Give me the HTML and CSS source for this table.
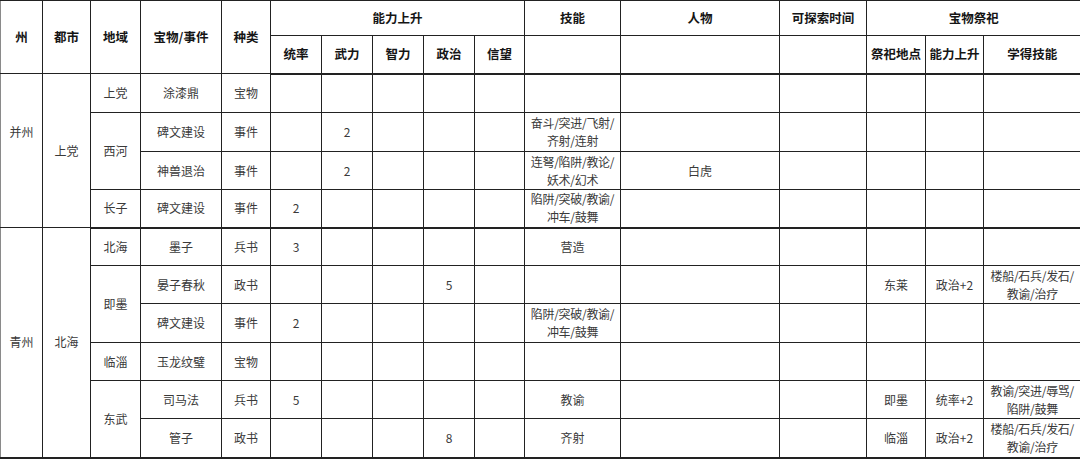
FILE: index.html
```html
<!DOCTYPE html>
<html lang="zh-CN">
<head>
<meta charset="utf-8">
<link rel="stylesheet" href="styles.css">
</head>
<body>
<table class="sheet">
  <colgroup>
    <col class="c-zhou"><col class="c-city"><col class="c-area"><col class="c-item"><col class="c-kind">
    <col class="c-stat"><col class="c-stat"><col class="c-stat"><col class="c-stat"><col class="c-stat2">
    <col class="c-skill"><col class="c-person"><col class="c-time"><col class="c-place"><col class="c-up"><col class="c-learn">
  </colgroup>
  <thead>
    <tr class="h1">
      <th rowspan="2">州</th>
      <th rowspan="2">都市</th>
      <th rowspan="2">地域</th>
      <th rowspan="2">宝物/事件</th>
      <th rowspan="2">种类</th>
      <th colspan="5">能力上升</th>
      <th>技能</th>
      <th>人物</th>
      <th>可探索时间</th>
      <th colspan="3">宝物祭祀</th>
    </tr>
    <tr class="h2">
      <th>统率</th><th>武力</th><th>智力</th><th>政治</th><th>信望</th>
      <th></th><th></th><th></th>
      <th>祭祀地点</th><th>能力上升</th><th>学得技能</th>
    </tr>
  </thead>
  <tbody>
    <tr class="r39">
      <td rowspan="4" class="zhou-top">并州</td>
      <td rowspan="4">上党</td>
      <td>上党</td><td>涂漆鼎</td><td>宝物</td>
      <td></td><td></td><td></td><td></td><td></td><td></td><td></td><td></td><td></td><td></td><td></td>
    </tr>
    <tr class="r39">
      <td rowspan="2">西河</td><td>碑文建设</td><td>事件</td>
      <td></td><td>2</td><td></td><td></td><td></td>
      <td class="two">奋斗/突进/飞射/<br>齐射/连射</td>
      <td></td><td></td><td></td><td></td><td></td>
    </tr>
    <tr class="r38">
      <td>神兽退治</td><td>事件</td>
      <td></td><td>2</td><td></td><td></td><td></td>
      <td class="two">连弩/陷阱/教论/<br>妖术/幻术</td>
      <td>白虎</td><td></td><td></td><td></td><td></td>
    </tr>
    <tr class="r38 sep">
      <td>长子</td><td>碑文建设</td><td>事件</td>
      <td>2</td><td></td><td></td><td></td><td></td>
      <td class="two">陷阱/突破/教谕/<br>冲车/鼓舞</td>
      <td></td><td></td><td></td><td></td><td></td>
    </tr>
    <tr class="r38">
      <td rowspan="6" class="sep">青州</td>
      <td rowspan="6" class="sep">北海</td>
      <td>北海</td><td>墨子</td><td>兵书</td>
      <td>3</td><td></td><td></td><td></td><td></td>
      <td>营造</td>
      <td></td><td></td><td></td><td></td><td></td>
    </tr>
    <tr class="r38">
      <td rowspan="2">即墨</td><td>晏子春秋</td><td>政书</td>
      <td></td><td></td><td></td><td>5</td><td></td>
      <td></td><td></td><td></td>
      <td>东莱</td><td>政治+2</td><td class="two">楼船/石兵/发石/<br>教谕/治疗</td>
    </tr>
    <tr class="r39">
      <td>碑文建设</td><td>事件</td>
      <td>2</td><td></td><td></td><td></td><td></td>
      <td class="two">陷阱/突破/教谕/<br>冲车/鼓舞</td>
      <td></td><td></td><td></td><td></td><td></td>
    </tr>
    <tr class="r38">
      <td>临淄</td><td>玉龙纹璧</td><td>宝物</td>
      <td></td><td></td><td></td><td></td><td></td><td></td><td></td><td></td><td></td><td></td><td></td>
    </tr>
    <tr class="r38">
      <td rowspan="2" class="sep">东武</td><td>司马法</td><td>兵书</td>
      <td>5</td><td></td><td></td><td></td><td></td>
      <td>教谕</td>
      <td></td><td></td>
      <td>即墨</td><td>统率+2</td><td class="two">教谕/突进/辱骂/<br>陷阱/鼓舞</td>
    </tr>
    <tr class="r39 sep">
      <td>管子</td><td>政书</td>
      <td></td><td></td><td></td><td>8</td><td></td>
      <td>齐射</td>
      <td></td><td></td>
      <td>临淄</td><td>政治+2</td><td class="two">楼船/石兵/发石/<br>教谕/治疗</td>
    </tr>
  </tbody>
</table>
</body>
</html>
```

FILE: styles.css
```css
html, body {
  margin: 0;
  padding: 0;
  background: #ffffff;
}

body {
  font-family: "Noto Sans CJK SC", "Noto Sans", "Liberation Sans", sans-serif;
  overflow: hidden;
}

.sheet {
  border-collapse: collapse;
  table-layout: fixed;
  width: 1080px;
  font-size: 12px;
  color: #3a3a3a;
}

.c-zhou { width: 42px; }
.c-city { width: 48px; }
.c-area { width: 50px; }
.c-item { width: 81px; }
.c-kind { width: 49px; }
.c-stat { width: 51px; }
.c-stat2 { width: 50px; }
.c-skill { width: 96px; }
.c-person { width: 159px; }
.c-time { width: 87px; }
.c-place { width: 59px; }
.c-up { width: 58px; }
.c-learn { width: 97px; }

.sheet th,
.sheet td {
  border: 1px solid #222222;
  padding: 0;
  text-align: center;
  vertical-align: middle;
  line-height: 18px;
  overflow: hidden;
  white-space: nowrap;
}

.sheet th {
  font-weight: 700;
  color: #151515;
  font-size: 12.5px;
}

.sheet th:first-child,
.sheet td:first-child {
  border-left-color: #8a8a8a;
}

.sheet th:last-child,
.sheet td:last-child {
  border-right: none;
}

.h1 { height: 35px; }
.h2 { height: 38px; }
.h2 th { border-bottom: 2px solid #222222; }

.r38 { height: 38px; }
.r39 { height: 39px; }

.sep td,
td.sep {
  border-bottom: 2px solid #222222;
}

.zhou-top {
  padding-bottom: 38px !important;
}

.two {
  line-height: 18px;
  letter-spacing: -0.3px;
}
```
